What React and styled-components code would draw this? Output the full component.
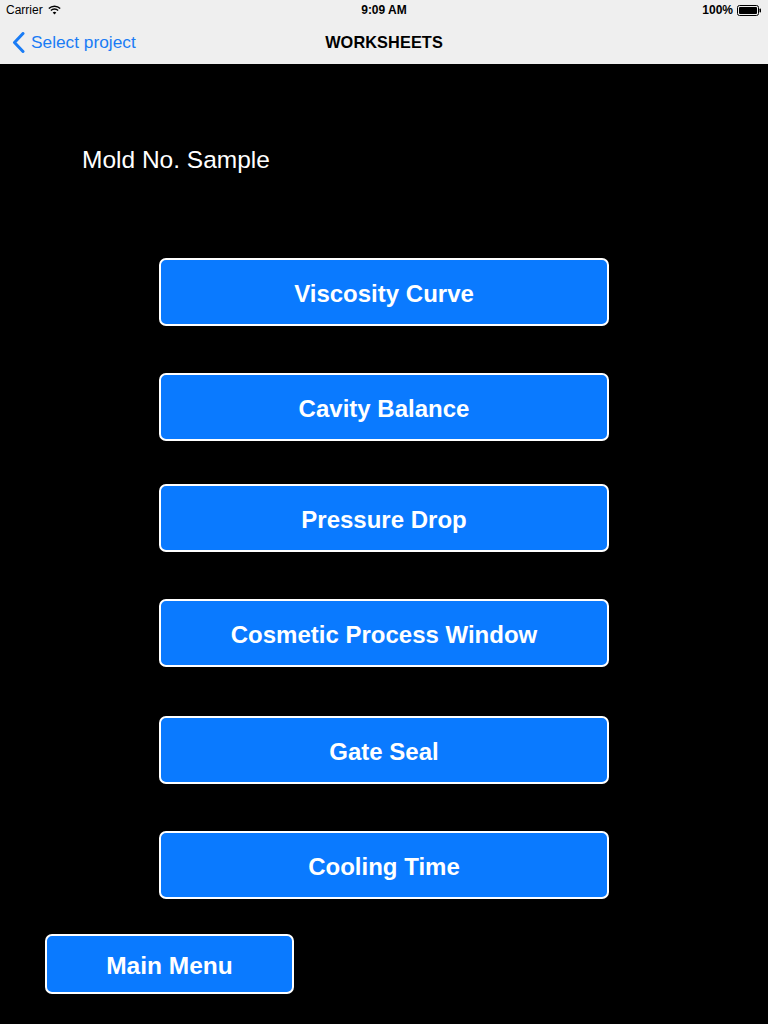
import React from "react";
import styled, { createGlobalStyle } from "styled-components";

const Global = createGlobalStyle`
  html, body { margin: 0; padding: 0; background: #000; }
  body { font-family: "Liberation Sans", Arial, sans-serif; -webkit-font-smoothing: antialiased; }
  * { box-sizing: border-box; }
`;

const Screen = styled.div`
  width: 768px;
  height: 1024px;
  background: #000;
  display: flex;
  flex-direction: column;
  overflow: hidden;
`;

const Header = styled.header`
  background: #efefef;
  height: 64px;
  display: flex;
  flex-direction: column;
`;

const StatusBar = styled.div`
  height: 20px;
  display: grid;
  grid-template-columns: 1fr auto 1fr;
  align-items: center;
  padding: 0 6px;
  font-size: 12px;
  color: #000;
`;

const StatusLeft = styled.div`
  display: flex;
  align-items: center;
  gap: 5px;
`;

const StatusTime = styled.div`
  font-weight: 700;
  font-size: 12px;
`;

const StatusRight = styled.div`
  display: flex;
  justify-content: flex-end;
  align-items: center;
  gap: 4px;
  font-weight: 700;
`;

const NavBar = styled.nav`
  flex: 1;
  display: grid;
  grid-template-columns: 1fr auto 1fr;
  align-items: center;
  padding: 0 12px;
`;

const BackLink = styled.a`
  display: flex;
  align-items: center;
  gap: 6px;
  color: #1a7cf5;
  font-size: 17.3px;
  text-decoration: none;
`;

const Title = styled.h1`
  margin: 0;
  font-size: 16.3px;
  font-weight: 700;
  color: #000;
  letter-spacing: 0.1px;
`;

const Content = styled.main`
  flex: 1;
  display: flex;
  flex-direction: column;
`;

const MoldLabel = styled.div`
  color: #fff;
  font-size: 24.5px;
  margin: 83px 0 0 82px;
  line-height: 26px;
`;

const ButtonList = styled.div`
  display: flex;
  flex-direction: column;
  align-items: center;
  margin-top: 85px;
`;

const SheetButton = styled.button`
  width: 450px;
  height: 68px;
  margin-top: ${(p) => p.$gap}px;
  background: #0a7aff;
  border: 2px solid #fff;
  border-radius: 7px;
  color: #fff;
  font-family: "Liberation Sans", Arial, sans-serif;
  font-size: 24px;
  font-weight: 700;
  padding: 3px 0 0;
  cursor: pointer;
`;

const MainMenuButton = styled(SheetButton)`
  width: 249px;
  height: 60px;
  margin: 35px 0 0 45px;
  align-self: flex-start;
  font-size: 24.5px;
`;

const sheets = [
  { label: "Viscosity Curve", gap: 0 },
  { label: "Cavity Balance", gap: 47 },
  { label: "Pressure Drop", gap: 43 },
  { label: "Cosmetic Process Window", gap: 47 },
  { label: "Gate Seal", gap: 49 },
  { label: "Cooling Time", gap: 47 },
];

const Wifi = () => (
  <svg width="13" height="10" viewBox="0 0 13 10">
    <path d="M0.8 3.6 A8 8 0 0 1 12.2 3.6" fill="none" stroke="#000" strokeWidth="1.4" />
    <path d="M2.9 5.6 A5 5 0 0 1 10.1 5.6" fill="none" stroke="#000" strokeWidth="1.4" />
    <path d="M6.5 9.5 L4.7 7.5 A2.6 2.6 0 0 1 8.3 7.5 Z" fill="#000" />
  </svg>
);

const Battery = () => (
  <svg width="25" height="11" viewBox="0 0 25 11">
    <rect x="0.5" y="0.5" width="21" height="10" rx="2" fill="none" stroke="#000" strokeWidth="1" />
    <rect x="2" y="2" width="18" height="7" rx="1" fill="#000" />
    <rect x="22.5" y="3.5" width="1.5" height="4" rx="0.7" fill="#000" />
  </svg>
);

const Chevron = () => (
  <svg width="13" height="21" viewBox="0 0 13 21">
    <path d="M11 1.5 L2.5 10.5 L11 19.5" fill="none" stroke="#1a7cf5" strokeWidth="3" strokeLinecap="round" strokeLinejoin="round" />
  </svg>
);

export default function App() {
  return (
    <>
      <Global />
      <Screen>
        <Header>
          <StatusBar>
            <StatusLeft>
              <span>Carrier</span>
              <Wifi />
            </StatusLeft>
            <StatusTime>9:09 AM</StatusTime>
            <StatusRight>
              <span>100%</span>
              <Battery />
            </StatusRight>
          </StatusBar>
          <NavBar>
            <BackLink href="#">
              <Chevron />
              <span>Select project</span>
            </BackLink>
            <Title>WORKSHEETS</Title>
            <div />
          </NavBar>
        </Header>
        <Content>
          <MoldLabel>Mold No. Sample</MoldLabel>
          <ButtonList>
            {sheets.map((s) => (
              <SheetButton key={s.label} $gap={s.gap}>
                {s.label}
              </SheetButton>
            ))}
          </ButtonList>
          <MainMenuButton $gap={0}>Main Menu</MainMenuButton>
        </Content>
      </Screen>
    </>
  );
}
